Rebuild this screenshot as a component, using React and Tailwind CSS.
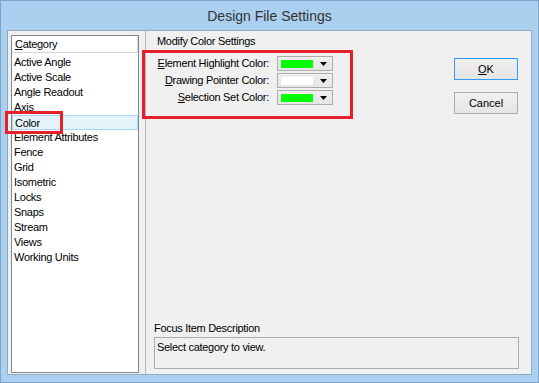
import React from 'react';

const categories = [
  'Active Angle',
  'Active Scale',
  'Angle Readout',
  'Axis',
  'Color',
  'Element Attributes',
  'Fence',
  'Grid',
  'Isometric',
  'Locks',
  'Snaps',
  'Stream',
  'Views',
  'Working Units',
];

const colorRows = [
  { key: 'E', rest: 'lement Highlight Color:', swatch: 'bg-[#00ff00]' },
  { key: 'D', rest: 'rawing Pointer Color:', swatch: 'bg-white' },
  { key: 'S', rest: 'election Set Color:', swatch: 'bg-[#00ff00]' },
];

const ColorCombo = ({ swatch }) => (
  <div className="w-[56px] h-[15px] border border-[#acacac] bg-gradient-to-b from-[#f0f0f0] to-[#e5e5e5] flex items-center pl-[3px] pr-[5px]">
    <div className={`w-[32px] h-[8px] ${swatch}`}></div>
    <svg className="ml-auto" width="7" height="4" viewBox="0 0 7 4">
      <path d="M0 0h7L3.5 4z" fill="#000" />
    </svg>
  </div>
);

export default function App() {
  return (
    <div className="relative w-[539px] h-[383px] bg-[#abcfee] border border-[#7ea4c7] flex flex-col font-['Liberation_Sans',Arial,sans-serif] text-[11px] tracking-[-0.3px] text-black overflow-hidden">
      <div className="h-[29px] flex items-center justify-center text-[14px] tracking-normal text-[#333] pt-[1px]">
        Design File Settings
      </div>

      <div className="flex-1 mx-[6px] mb-[7px] border border-[#8ea9c2] bg-[#f0f0f0] flex">
        {/* category list */}
        <div className="w-[137px] pl-[3px] pt-[4px] pb-[1px] flex">
          <div className="w-[128px] border border-[#828790] bg-white flex flex-col">
            <div className="h-[17px] border-b border-r border-[#d5d5d5] flex items-center pl-[3px]">
              <span className="underline">C</span>ategory
            </div>
            <div className="flex flex-col pt-[2px]">
              {categories.map((c) => (
                <div
                  key={c}
                  className={`h-[15px] leading-[15px] pl-[2px] ${
                    c === 'Color' ? 'bg-[#e5f3fb] border border-[#a6d6f7] leading-[13px] pl-[1px]' : ''
                  }`}
                >
                  {c}
                </div>
              ))}
            </div>
          </div>
        </div>

        <div className="w-px bg-[#b9b9b9]"></div>

        {/* settings panel */}
        <div className="flex-1 flex flex-col">
          <div className="flex">
            <div className="flex-1 pl-[11px] pt-[3px]">
              <div className="h-[15px] leading-[15px]">Modify Color Settings</div>
              <div className="mt-[7px] flex flex-col gap-[2px] w-[176px]">
                {colorRows.map((r) => (
                  <div key={r.key} className="h-[15px] flex items-center justify-end gap-[8px]">
                    <span>
                      <span className="underline">{r.key}</span>
                      {r.rest}
                    </span>
                    <ColorCombo swatch={r.swatch} />
                  </div>
                ))}
              </div>
            </div>
            <div className="pr-[13px] pt-[27px] flex flex-col gap-[12px]">
              <button className="w-[64px] h-[22px] border border-[#3399ff] bg-gradient-to-b from-[#f0f0f0] to-[#e5e5e5] text-[11px] tracking-normal">
                <span className="underline">O</span>K
              </button>
              <button className="w-[64px] h-[22px] border border-[#acacac] bg-gradient-to-b from-[#f0f0f0] to-[#e5e5e5] text-[11px] tracking-normal">
                Cancel
              </button>
            </div>
          </div>

          <div className="mt-auto pl-[8px] pr-[12px] pb-[5px]">
            <div className="h-[15px] leading-[15px] mb-[1px]">Focus Item Description</div>
            <div className="h-[32px] border border-[#acacac] pl-[2px] pt-[2px] leading-[15px]">
              Select category to view.
            </div>
          </div>
        </div>
      </div>

      {/* annotation rectangles */}
      <div className="absolute left-[4px] top-[110px] w-[58px] h-[23px] border-[3px] border-[#e5202a]"></div>
      <div className="absolute left-[141px] top-[49px] w-[211px] h-[69px] border-[3px] border-[#e5202a]"></div>
    </div>
  );
}
